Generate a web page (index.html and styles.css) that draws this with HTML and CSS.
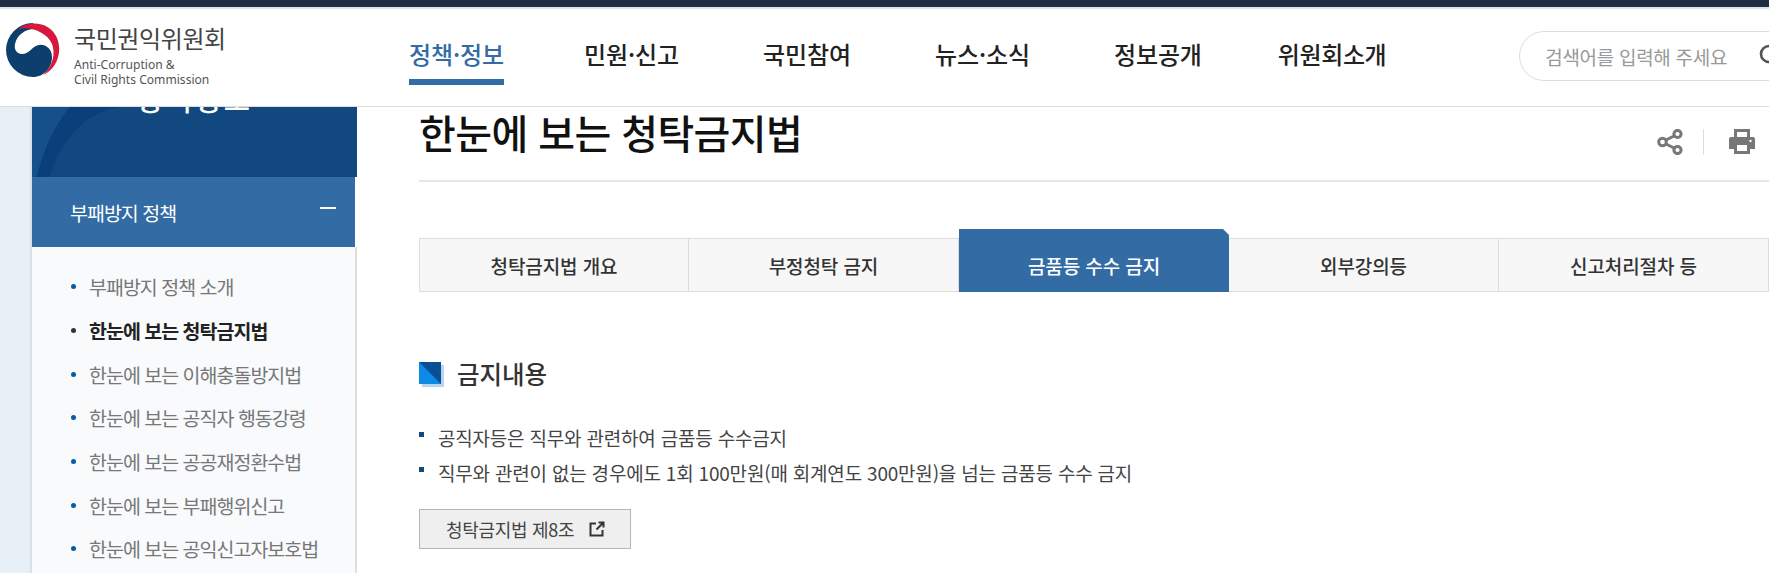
FILE: index.html
```html
<!DOCTYPE html>
<html lang="ko">
  <head>
    <meta charset="UTF-8" />
    <title>한눈에 보는 청탁금지법 | 국민권익위원회</title>
    <link rel="stylesheet" href="styles.css">
  </head>
  <body>
    <div class="top-bar"></div>

    <header class="header">
      <a class="logo">
        <svg class="logo-mark" viewBox="0 0 54 54">
          <path d="M27 0A27 27 0 0 0 27 54C38 54 46 45 46 34C46 25 38 20 31 22.500C25 25 22 32 15 31C10 30 8 26 9 21C11 12 19 6 29 6Z" fill="#0d3f6e"/>
          <path d="M12 6C25 -4 45 0 51 15C57 30 50 46 37 52C46 44 50 32 46 21C41 9 24 3 12 6Z" fill="#d7173c"/>
        </svg>
        <div class="logo-text">
          <div class="logo-name">국민권익위원회</div>
          <div class="logo-en">Anti-Corruption &amp;<br />Civil Rights Commission</div>
        </div>
      </a>

      <nav class="gnb">
        <a class="gnb-item on">정책·정보</a>
        <a class="gnb-item">민원·신고</a>
        <a class="gnb-item">국민참여</a>
        <a class="gnb-item">뉴스·소식</a>
        <a class="gnb-item">정보공개</a>
        <a class="gnb-item">위원회소개</a>
      </nav>

      <div class="search">
        <span class="search-text">검색어를 입력해 주세요</span>
        <svg class="search-icon" viewBox="0 0 24 24">
          <circle cx="10" cy="10" r="8" fill="none" stroke="#555" stroke-width="2.6"/>
          <path d="M16 16L22 22" stroke="#555" stroke-width="2.6"/>
        </svg>
      </div>
    </header>

    <div class="page">
      <div class="strip"></div>

      <aside class="sidebar">
        <div class="side-title">
          <svg class="side-arcs" viewBox="0 0 325 70" preserveAspectRatio="none">
            <path d="M0 0H38C25 15 12 40 5 70H0Z" fill="#15508a"/>
            <path d="M5 70C12 40 25 15 38 0H85C50 8 28 35 18 70Z" fill="#0b3f7c"/>
          </svg>
          <div class="side-title-text">정책정보</div>
        </div>
        <div class="side-head">
          <span>부패방지 정책</span>
          <i class="minus"></i>
        </div>
        <ul class="side-menu">
          <li>부패방지 정책 소개</li>
          <li class="on">한눈에 보는 청탁금지법</li>
          <li>한눈에 보는 이해충돌방지법</li>
          <li>한눈에 보는 공직자 행동강령</li>
          <li>한눈에 보는 공공재정환수법</li>
          <li>한눈에 보는 부패행위신고</li>
          <li>한눈에 보는 공익신고자보호법</li>
        </ul>
      </aside>

      <main class="main">
        <div class="title-row">
          <h1>한눈에 보는 청탁금지법</h1>
          <div class="tools">
            <svg class="tool-icon" viewBox="0 0 26 26">
              <g fill="none" stroke="#777" stroke-width="3">
                <circle cx="5.500" cy="13" r="3.800"/>
                <circle cx="20.500" cy="5" r="3.600"/>
                <circle cx="20.500" cy="21" r="3.600"/>
                <path d="M9 11L17 7M9 15L17 19"/>
              </g>
            </svg>
            <span class="tool-sep"></span>
            <svg class="tool-icon" viewBox="0 0 26 26">
              <path d="M5 0H21V8H24Q26 8 26 10V20H21V25H5V20H0V10Q0 8 2 8H5ZM8 3V8H18V3ZM8 16V22H18V16Z" fill="#777" fill-rule="evenodd"/>
              <circle cx="21.500" cy="12" r="1.200" fill="#fff"/>
            </svg>
          </div>
        </div>

        <div class="tabs">
          <a class="tab">청탁금지법 개요</a>
          <a class="tab">부정청탁 금지</a>
          <a class="tab on">금품등 수수 금지</a>
          <a class="tab">외부강의등</a>
          <a class="tab">신고처리절차 등</a>
        </div>

        <h2 class="sec-title">
          <svg class="sec-icon" viewBox="0 0 25 25">
            <rect x="3" y="3" width="22" height="22" fill="#b9d5ee"/>
            <rect x="0" y="0" width="22" height="22" fill="#0d8ae6"/>
            <path d="M0 0H22V22Z" fill="#0a4f96"/>
          </svg>
          금지내용
        </h2>

        <ul class="bullets">
          <li>공직자등은 직무와 관련하여 금품등 수수금지</li>
          <li>직무와 관련이 없는 경우에도 1회 100만원(매 회계연도 300만원)을 넘는 금품등 수수 금지</li>
        </ul>

        <a class="law-btn">
          청탁금지법 제8조
          <svg class="law-icon" viewBox="0 0 16 16">
            <path d="M7 2.500H1.500V14.500H13.500V9M9.500 1.500H14.500V6.500M14.500 1.500L7.500 8.500" fill="none" stroke="#333" stroke-width="2"/>
          </svg>
        </a>
      </main>
    </div>
  </body>
</html>
```

FILE: styles.css
```css
html,
body {
  height: 573px;
  overflow: hidden;
}
body {
  margin: 0;
  font-family: "Noto Sans CJK KR", "Noto Sans", sans-serif;
  color: #333;
  background: #fff;
}
ul {
  list-style: none;
  margin: 0;
  padding: 0;
}

.top-bar {
  height: 7px;
  background: #1f2d45;
  border-bottom: 2px solid #dfe3e8;
}

/* header */
.header {
  position: relative;
  z-index: 2;
  display: flex;
  align-items: center;
  height: 98px;
  padding-bottom: 3px;
  box-sizing: border-box;
  background: #fff;
  border-bottom: 1px solid #ddd;
}
.logo {
  display: flex;
  align-items: flex-start;
  align-self: flex-start;
  gap: 14px;
  width: 409px;
  padding: 14px 0 0 6px;
  box-sizing: border-box;
  flex: none;
}
.logo-mark {
  width: 54px;
  height: 54px;
  flex: none;
}
.logo-name {
  font-size: 24px;
  line-height: 30px;
  color: #444;
  letter-spacing: -0.4px;
}
.logo-en {
  margin-top: 4px;
  font-family: "Noto Sans", sans-serif;
  font-size: 12.100px;
  line-height: 15px;
  color: #555;
}
.gnb {
  display: flex;
  gap: 84px;
  flex: none;
  margin-bottom: 4px;
}
.gnb-item {
  position: relative;
  font-size: 24px;
  font-weight: 500;
  line-height: 48px;
  color: #222;
  letter-spacing: -0.1px;
}
.gnb-item:first-child {
  margin-right: -4px;
}
.gnb-item:last-child {
  margin-left: -8px;
  letter-spacing: -0.4px;
}
.gnb-item.on {
  color: #336ba5;
}
.gnb-item.on::after {
  content: "";
  position: absolute;
  left: 0;
  right: 0;
  bottom: -7px;
  height: 6px;
  background: #336ba5;
}
.search {
  display: flex;
  align-items: center;
  flex: none;
  margin-left: 133px;
  width: 300px;
  height: 50px;
  box-sizing: border-box;
  padding-left: 25px;
  border: 1px solid #ddd;
  border-radius: 25px;
}
.search-text {
  font-size: 19px;
  color: #999;
  letter-spacing: -0.3px;
}
.search-icon {
  width: 24px;
  height: 24px;
  margin-left: 32px;
  flex: none;
}

/* page body */
.page {
  display: flex;
  height: 466px;
  overflow: hidden;
}
.strip {
  width: 30px;
  flex: none;
  background: #e8f0f7;
  border-right: 2px solid #dcdfe3;
}

/* left menu */
.sidebar {
  width: 325px;
  flex: none;
}
.side-title {
  position: relative;
  height: 70px;
  overflow: hidden;
  background: #10487f;
}
.side-arcs {
  position: absolute;
  left: 0;
  top: 0;
  width: 100%;
  height: 100%;
}
.side-title-text {
  position: relative;
  margin-top: -31px;
  text-align: center;
  font-size: 28.500px;
  font-weight: 500;
  line-height: 46px;
  letter-spacing: 3px;
  color: #fff;
}
.side-head {
  display: flex;
  align-items: center;
  justify-content: space-between;
  height: 70px;
  margin-right: 2px;
  padding: 0 19px 0 38px;
  background: #336ba5;
  font-size: 19.500px;
  letter-spacing: -1px;
  color: #fff;
}
.minus {
  width: 16px;
  height: 2px;
  margin-bottom: 8px;
  background: #fff;
}
.side-menu {
  height: 400px;
  padding-top: 18px;
  background: #f8fafc;
  border-right: 2px solid #ddd;
}
.side-menu li {
  display: flex;
  align-items: center;
  height: 43.700px;
  padding-left: 39px;
  font-size: 19.500px;
  letter-spacing: -1px;
  color: #777;
}
.side-menu li::before {
  content: "";
  width: 5px;
  height: 5px;
  margin-right: 13px;
  border-radius: 50%;
  background: #0b5a9e;
}
.side-menu li.on {
  font-weight: 700;
  color: #222;
}
.side-menu li.on::before {
  background: #333;
}

/* content */
.main {
  flex: 1;
  min-width: 0;
  margin-left: 62px;
}
.title-row {
  display: flex;
  align-items: center;
  justify-content: space-between;
  height: 73px;
  border-bottom: 2px solid #e6e6e6;
}
h1 {
  margin: 0 0 24px;
  font-size: 40px;
  font-weight: 500;
  line-height: 50px;
  letter-spacing: -0.6px;
  color: #111;
}
.tools {
  display: flex;
  align-items: center;
  padding-right: 14px;
  margin-bottom: 4px;
}
.tool-icon {
  width: 26px;
  height: 26px;
}
.tool-sep {
  width: 1px;
  height: 26px;
  margin: 0 25px 0 20px;
  background: #ddd;
}
.tabs {
  display: grid;
  grid-template-columns: repeat(5, 270px);
  margin-top: 56px;
}
.tab {
  display: flex;
  align-items: center;
  justify-content: center;
  height: 54px;
  box-sizing: border-box;
  background: #f7f7f7;
  border: 1px solid #ddd;
  border-left: 0;
  font-size: 19px;
  font-weight: 500;
  color: #333;
  letter-spacing: -0.1px;
}
.tab:first-child {
  border-left: 1px solid #ddd;
}
.tab.on {
  height: 63px;
  margin-top: -9px;
  padding-top: 9px;
  border: 0;
  background: #336ba5;
  color: #fff;
  clip-path: polygon(0 0, calc(100% - 6px) 0, 100% 6px, 100% 100%, 0 100%);
}
.sec-title {
  display: flex;
  align-items: center;
  gap: 13px;
  margin: 65px 0 0;
  font-size: 24.500px;
  font-weight: 500;
  line-height: 34px;
  color: #333;
}
.sec-icon {
  width: 25px;
  height: 25px;
}
.bullets {
  margin-top: 29px;
}
.bullets li {
  position: relative;
  padding-left: 19px;
  font-size: 19px;
  line-height: 35px;
  color: #444;
  letter-spacing: -0.2px;
}
.bullets li::before {
  content: "";
  position: absolute;
  left: 0;
  top: 12px;
  width: 5px;
  height: 5px;
  background: #10487f;
}
.law-btn {
  display: inline-flex;
  align-items: center;
  gap: 15px;
  height: 40px;
  margin-top: 19px;
  padding: 0 25px 0 26px;
  box-sizing: border-box;
  background: #efefef;
  border: 1px solid #b5b5b5;
  font-size: 18px;
  color: #444;
  letter-spacing: -0.3px;
}
.law-icon {
  width: 16px;
  height: 16px;
}
```
